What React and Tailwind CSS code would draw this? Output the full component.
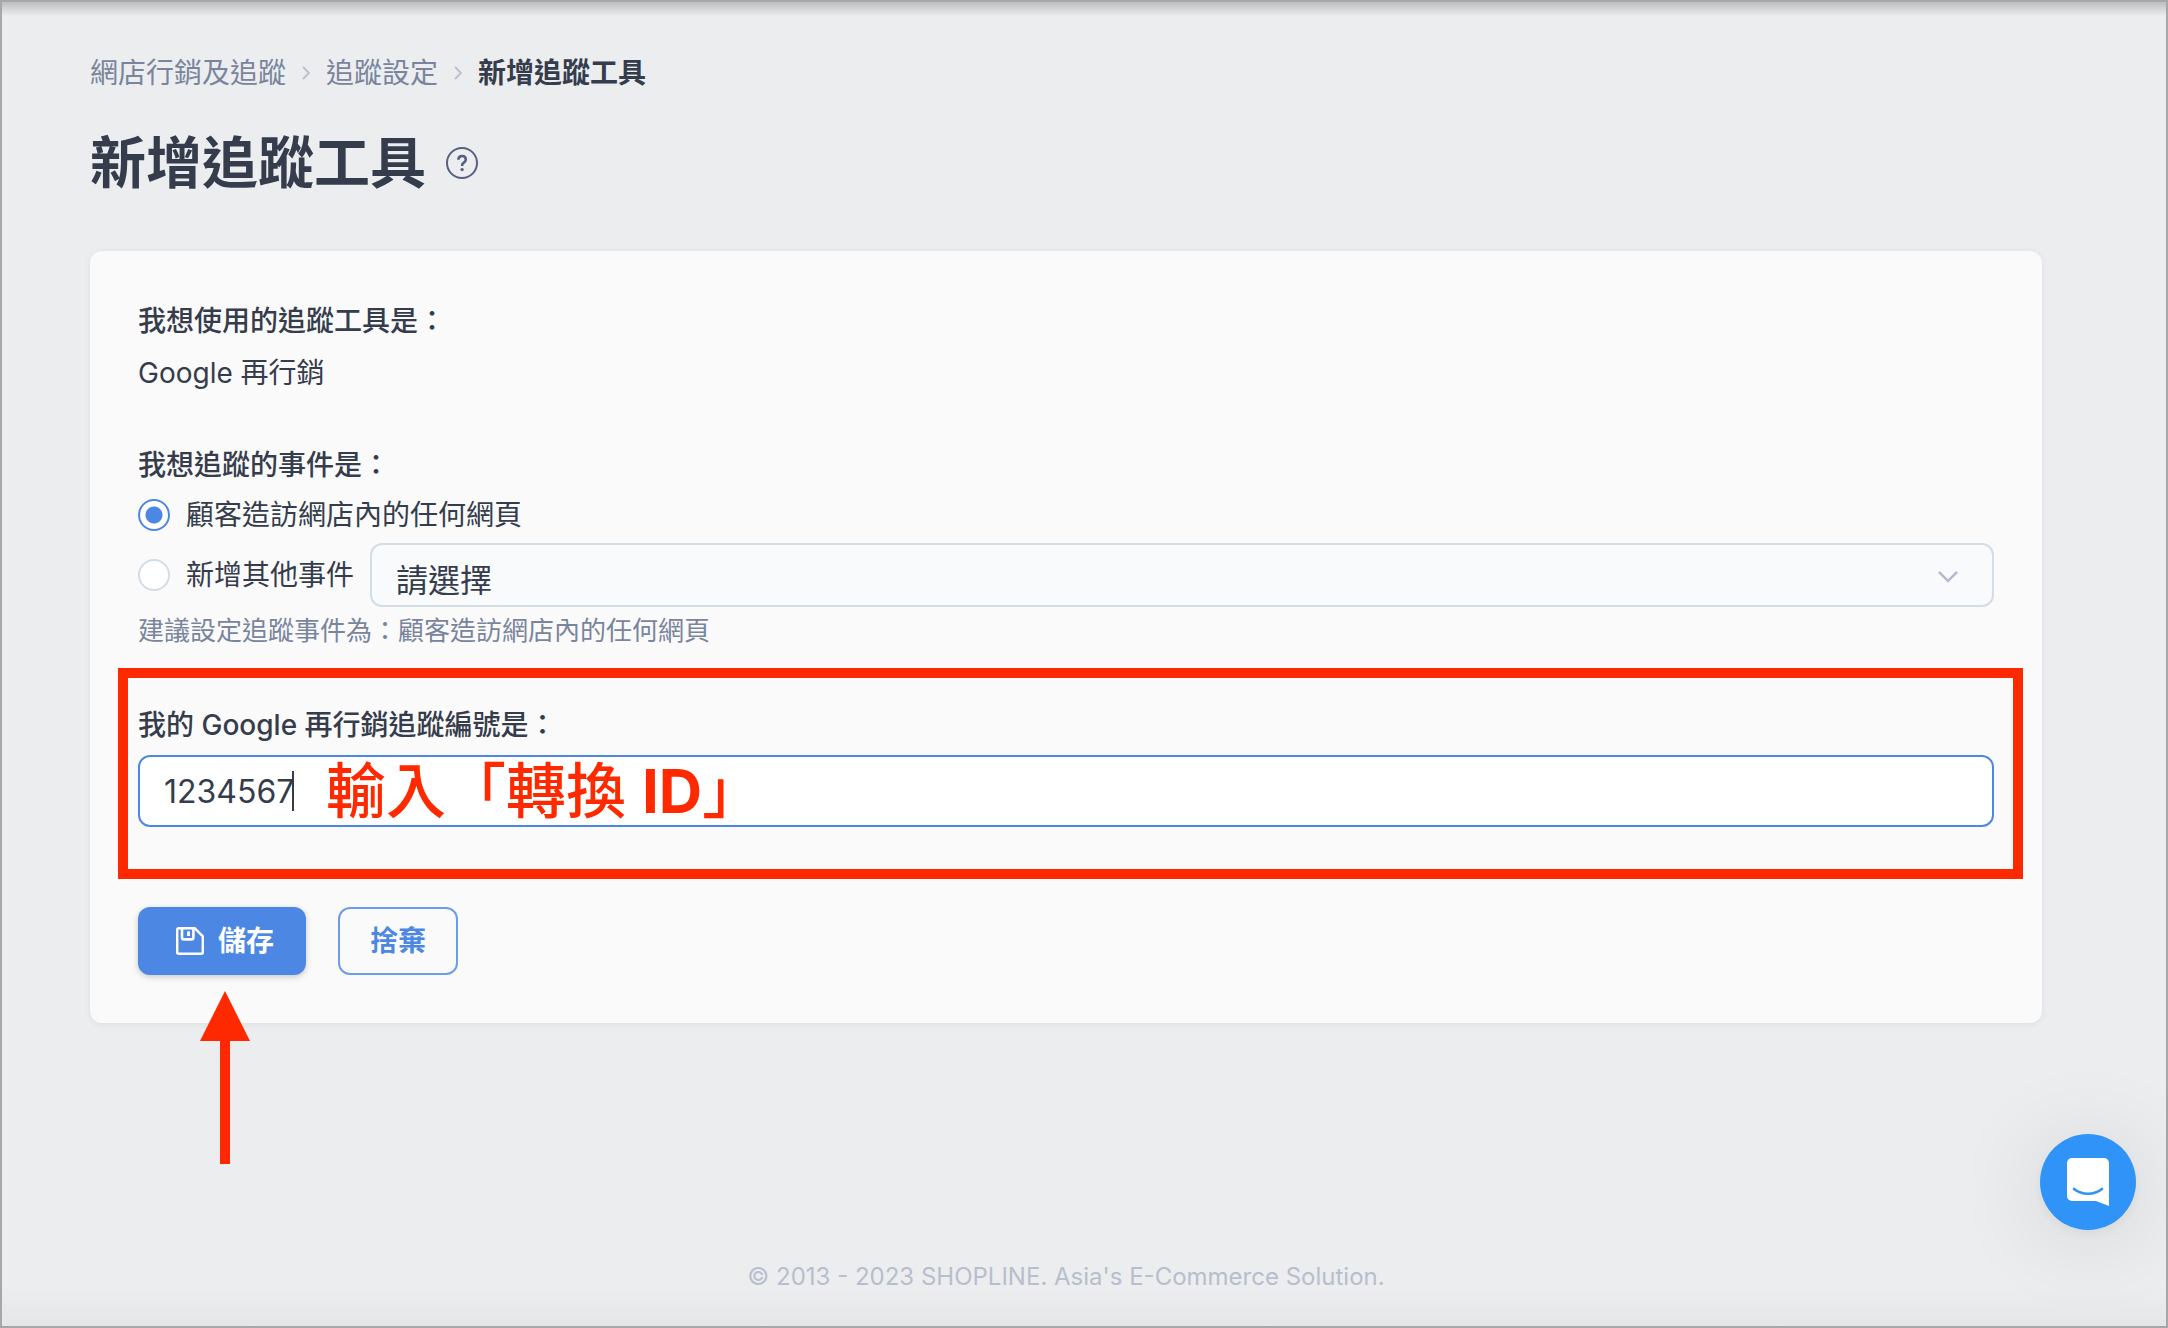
import React, { useState } from "react";

const breadcrumbs = ["網店行銷及追蹤", "追蹤設定"];

const HelpIcon = () => (
  <svg viewBox="0 0 32 32" className="size-8" fill="none" stroke="#55617f" strokeWidth="2">
    <circle cx="16" cy="16" r="15" />
    <path
      d="M12.4 12.8c0-2.2 1.5-3.8 3.7-3.8s3.7 1.4 3.7 3.5c0 1.6-.9 2.4-2 3.2-1.2.8-1.7 1.4-1.7 2.7v.5"
      strokeWidth="2.6"
    />
    <circle cx="16.1" cy="22.6" r="1.7" fill="#55617f" stroke="none" />
  </svg>
);

const SaveIcon = () => (
  <svg viewBox="0 0 28 28" className="size-7" fill="none" stroke="#fff" strokeWidth="2.4">
    <path d="M2.700 1.2H18.700L26.800 9.300V25.300a1.500 1.500 0 0 1-1.500 1.500H2.700a1.500 1.500 0 0 1-1.500-1.500V2.700a1.500 1.500 0 0 1 1.500-1.500Z" />
    <path d="M6 1.5V10.400a2 2 0 0 0 2 2H15.400a2 2 0 0 0 2-2V1.5" strokeWidth="2.6" />
    <rect x="11" y="4.4" width="3" height="4.6" fill="#fff" stroke="none" />
  </svg>
);

const Radio = ({ value, checked, onChange, children }) => (
  <label className="flex shrink-0 items-center gap-4">
    <input
      type="radio"
      name="event"
      value={value}
      checked={checked}
      onChange={() => onChange(value)}
      className="size-8 appearance-none rounded-full border-2 border-[#d2dde6] bg-white checked:border-[#4c88e3] checked:bg-[radial-gradient(circle,#4c88e3_8px,#ffffff_9px)]"
    />
    {children}
  </label>
);

const App = () => {
  const [event, setEvent] = useState("all");
  const [trackingId, setTrackingId] = useState("1234567");

  return (
    <div className="relative flex min-h-screen flex-col border-2 border-[#a6a7a9] bg-[#ecedef] pr-[124px] pl-[88px] font-['Inter','Noto_Sans_CJK_TC',sans-serif] text-[28px] leading-[44px] text-[#353c4c]">
      <div className="pointer-events-none absolute inset-x-0 top-0 h-3.5 bg-linear-to-b from-black/20 to-transparent" />
      <div className="pointer-events-none absolute inset-x-0 bottom-0 h-10 bg-linear-to-t from-black/3 to-transparent" />

      <nav className="flex items-center pt-[51px] leading-10">
        {breadcrumbs.map((item) => (
          <React.Fragment key={item}>
            <a href="#" className="text-[#79859d]">
              {item}
            </a>
            <svg viewBox="0 0 8 14" className="mx-4 h-3.5 w-2" fill="none" stroke="#b7becd" strokeWidth="1.8">
              <path d="M1 1l6 6-6 6" />
            </svg>
          </React.Fragment>
        ))}
        <span className="font-bold">新增追蹤工具</span>
      </nav>

      <div className="mt-[34px] flex items-center gap-5">
        <h1 className="text-[56px] leading-[72px] font-bold">新增追蹤工具</h1>
        <button type="button" aria-label="說明">
          <HelpIcon />
        </button>
      </div>

      <form
        onSubmit={(e) => e.preventDefault()}
        className="mt-13 rounded-xl bg-[#fafafa] p-12 shadow-[0_1px_6px_rgba(40,50,80,0.08)]"
      >
        <h2 className="font-medium">我想使用的追蹤工具是：</h2>
        <p className="mt-2">Google 再行銷</p>

        <fieldset>
          <legend className="pt-12 font-medium">我想追蹤的事件是：</legend>
          <div className="mt-2 flex h-10 items-center">
            <Radio value="all" checked={event === "all"} onChange={setEvent}>
              顧客造訪網店內的任何網頁
            </Radio>
          </div>
          <div className="mt-2 flex items-center gap-4">
            <Radio value="other" checked={event === "other"} onChange={setEvent}>
              新增其他事件
            </Radio>
            <div className="relative flex-1">
              <select
                aria-label="其他事件"
                className="block h-16 w-full appearance-none rounded-xl border-2 border-[#d2dde6] bg-[#f9fafc] px-6 pt-3 text-[32px] leading-10"
              >
                <option>請選擇</option>
              </select>
              <svg
                viewBox="0 0 20 12"
                className="pointer-events-none absolute top-7 right-9 h-3 w-5"
                fill="none"
                stroke="#b5bccd"
                strokeWidth="2.6"
                strokeLinecap="round"
              >
                <path d="M1.6 1.6L10 10l8.400-8.400" />
              </svg>
            </div>
          </div>
          <p className="mt-1 text-[26px] leading-10 text-[#79859d]">建議設定追蹤事件為：顧客造訪網店內的任何網頁</p>
        </fieldset>

        <div className="relative mt-13">
          <label htmlFor="tracking-id" className="block font-medium">
            我的 Google 再行銷追蹤編號是：
          </label>
          <div className="relative mt-2">
            <input
              id="tracking-id"
              type="text"
              value={trackingId}
              onChange={(e) => setTrackingId(e.target.value)}
              className="block h-18 w-full rounded-xl border-2 border-[#4c88e3] bg-white px-6 text-[32px] outline-none"
            />
            <span className="absolute top-4 left-[154px] h-10 w-0.5 bg-[#353c4c]" />
            <span className="pointer-events-none absolute top-0 left-[188px] text-[60px] leading-[72px] font-medium text-[#ff2900]">
              輸入「轉換 <b className="font-bold">ID</b>」
            </span>
          </div>
          {/* highlight around the field */}
          <div className="pointer-events-none absolute -top-[35px] -right-[29px] -bottom-[52px] -left-5 border-10 border-[#ff2900]" />
        </div>

        <div className="mt-20 flex gap-8">
          <div className="relative">
            <button
              type="submit"
              className="flex h-17 w-42 items-center justify-center gap-3.5 rounded-xl bg-[#4c88e3] pl-1.5 font-bold text-white shadow-[0_2px_6px_rgba(0,0,0,0.2)]"
            >
              <SaveIcon />
              儲存
            </button>
            <svg
              viewBox="0 0 50 173"
              className="pointer-events-none absolute top-21 left-[62px] h-[173px] w-[50px]"
              fill="#ff2900"
            >
              <path d="M25 0L50 50H30V173H20V50H0Z" />
            </svg>
          </div>
          <button type="button" className="h-17 w-30 rounded-xl border-2 border-[#6d9de8] font-bold text-[#4c88e3]">
            捨棄
          </button>
        </div>
      </form>

      <footer className="mt-auto pt-20 pb-[31px] text-center text-2xl leading-9 text-[#b7becd]">
        © 2013 - 2023 SHOPLINE. Asia's E-Commerce Solution.
      </footer>

      <button
        type="button"
        aria-label="聊天"
        className="fixed right-8 bottom-[98px] flex size-24 items-center justify-center rounded-full bg-[#2f93f7] shadow-[0_4px_12px_rgba(0,0,0,0.06),0_8px_96px_rgba(0,0,0,0.12)]"
      >
        <svg viewBox="0 0 42 48" className="h-12 w-[42px]" fill="#fff">
          <path d="M5 0H37a5 5 0 0 1 5 5V48L29 43H5a5 5 0 0 1-5-5V5a5 5 0 0 1 5-5Z" />
          <path d="M7 31C15 37.300 27 37.300 35 31" fill="none" stroke="#2f93f7" strokeWidth="2.6" strokeLinecap="round" />
        </svg>
      </button>
    </div>
  );
};

export default App;
